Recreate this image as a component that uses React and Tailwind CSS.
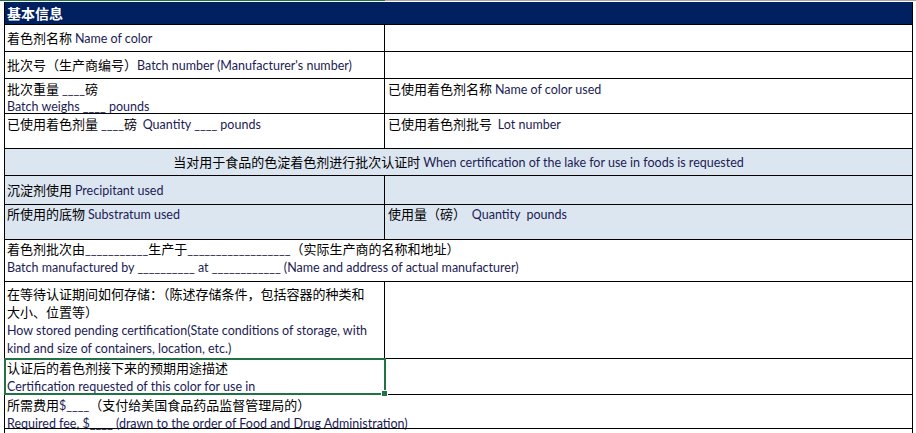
import React from "react";

const E = ({ children }) => (
  <span className="font-['Lato',sans-serif] text-[12.5px] leading-[12px] text-[#1c1c55]">{children}</span>
);

const Row = ({ h, bg = "", children }) => (
  <div className={`flex border-b border-black ${h} ${bg}`}>{children}</div>
);

const L = ({ children, h = "h-[18px]" }) => <div className={h}>{children}</div>;

export default function App() {
  return (
    <div className="w-[916px] h-[433px] bg-white overflow-hidden relative font-['Noto_Sans_CJK_SC',sans-serif] text-[13px] text-black leading-[18px] whitespace-pre">
      <div className="flex h-px">
        <div className="w-[385px] bg-[#217346]" />
        <div className="flex-1 bg-[#a6a6a6]" />
      </div>
      <div className="ml-[4px] mt-px w-[909px] h-[431px] border-x border-black flex flex-col">
        <div className="h-[23px] shrink-0 bg-[#002060] border-b border-black text-white font-bold text-[14px] pl-[2px] leading-[22px]">
          基本信息
        </div>

        <Row h="h-[27px] shrink-0">
          <div className="w-[379px] pl-[2px] pt-[4px]"><L>着色剂名称 <E>Name of color</E></L></div>
          <div className="flex-1 border-l border-black" />
        </Row>

        <Row h="h-[27px] shrink-0">
          <div className="w-[379px] pl-[2px] pt-[4px]"><L>批次号（生产商编号）<E>Batch number (Manufacturer's number)</E></L></div>
          <div className="flex-1 border-l border-black" />
        </Row>

        <Row h="h-[35px] shrink-0">
          <div className="w-[379px] pl-[2px] pt-[1px]">
            <L h="h-[17px]">批次重量 <E>____</E>磅</L>
            <L><E>Batch weighs ____ pounds</E></L>
          </div>
          <div className="flex-1 border-l border-black pl-[3px] pt-[1px]"><L>已使用着色剂名称 <E>Name of color used</E></L></div>
        </Row>

        <Row h="h-[35px] shrink-0">
          <div className="w-[379px] pl-[2px] pt-[1px]"><L>已使用着色剂量 <E>____</E>磅  <E>Quantity ____ pounds</E></L></div>
          <div className="flex-1 border-l border-black pl-[3px] pt-[1px]"><L>已使用着色剂批号  <E>Lot number</E></L></div>
        </Row>

        <Row h="h-[27px] shrink-0" bg="bg-[#dce6f1]">
          <div className="flex-1 text-center pt-[4px]">
            <L>当对用于食品的色淀着色剂进行批次认证时 <E>When certification of the lake for use in foods is requested</E></L>
          </div>
        </Row>

        <Row h="h-[29px] shrink-0" bg="bg-[#dce6f1]">
          <div className="w-[379px] pl-[2px] pt-[5px]"><L>沉淀剂使用 <E>Precipitant used</E></L></div>
          <div className="flex-1 border-l border-black" />
        </Row>

        <Row h="h-[35px] shrink-0" bg="bg-[#dce6f1]">
          <div className="w-[379px] pl-[2px]"><L>所使用的底物 <E>Substratum used</E></L></div>
          <div className="flex-1 border-l border-black pl-[3px]"><L>使用量（磅）  <E>Quantity  pounds</E></L></div>
        </Row>

        <Row h="h-[42px] shrink-0">
          <div className="flex-1 pl-[2px]">
            <L>着色剂批次由<E>___________</E>生产于<E>__________________</E>（实际生产商的名称和地址）</L>
            <L><E>Batch manufactured by __________ at ____________ (Name and address of actual manufacturer)</E></L>
          </div>
        </Row>

        <Row h="h-[77px] shrink-0">
          <div className="w-[379px] pl-[2px] pt-[3px]">
            <L>在等待认证期间如何存储：（陈述存储条件，包括容器的种类和</L>
            <L>大小、位置等）</L>
            <L><E>How stored pending certification(State conditions of storage, with</E></L>
            <L><E>kind and size of containers, location, etc.)</E></L>
          </div>
          <div className="flex-1 border-l border-black" />
        </Row>

        <Row h="h-[36px] shrink-0">
          <div className="w-[379px] pl-[2px]">
            <L>认证后的着色剂接下来的预期用途描述</L>
            <L><E>Certification requested of this color for use in</E></L>
          </div>
          <div className="flex-1 border-l border-black" />
        </Row>

        <Row h="h-[34px] shrink-0">
          <div className="flex-1 pl-[2px] pt-[1px]">
            <L>所需费用<E>$____</E>（支付给美国食品药品监督管理局的）</L>
            <L><E>Required fee, $____ (drawn to the order of Food and Drug Administration)</E></L>
          </div>
        </Row>

        <div className="flex-1" />
      </div>

      <div className="absolute left-[4px] top-[358px] w-[382px] h-[37px] border-2 border-[#217346]" />
      <div className="absolute left-[381px] top-[390px] w-[7px] h-[7px] bg-[#217346] border border-white" />
    </div>
  );
}
